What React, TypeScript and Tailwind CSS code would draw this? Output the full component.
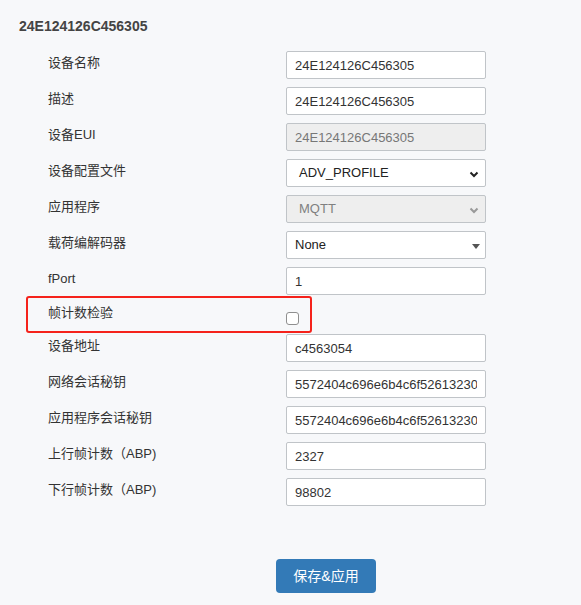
import React from 'react';

type Row = {
    label: string;
    value: string;
    kind?: 'text' | 'disabled' | 'select' | 'select-disabled' | 'combo';
};

const topRows: Row[] = [
    { label: '设备名称', value: '24E124126C456305' },
    { label: '描述', value: '24E124126C456305' },
    { label: '设备EUI', value: '24E124126C456305', kind: 'disabled' },
    { label: '设备配置文件', value: 'ADV_PROFILE', kind: 'select' },
    { label: '应用程序', value: 'MQTT', kind: 'select-disabled' },
    { label: '载荷编解码器', value: 'None', kind: 'combo' },
    { label: 'fPort', value: '1' },
];

const bottomRows: Row[] = [
    { label: '设备地址', value: 'c4563054' },
    { label: '网络会话秘钥', value: '5572404c696e6b4c6f52613230' },
    { label: '应用程序会话秘钥', value: '5572404c696e6b4c6f52613230' },
    { label: '上行帧计数（ABP)', value: '2327' },
    { label: '下行帧计数（ABP)', value: '98802' },
];

const Chevron = ({ color }: { color: string }) => (
    <svg width="10" height="7" viewBox="0 0 10 7" className="absolute right-[6px] top-[11px]">
        <path d="M1.5 1.5 L5 5 L8.5 1.5" fill="none" stroke={color} strokeWidth="2" />
    </svg>
);

const Field = ({ row }: { row: Row }) => {
    const kind = row.kind ?? 'text';
    const base = 'h-[28px] w-[200px] rounded-[2px] border border-[#c0c4c8] text-[13px] outline-none';

    if (kind === 'text' || kind === 'disabled') {
        return (
            <input
                type="text"
                defaultValue={row.value}
                disabled={kind === 'disabled'}
                className={
                    kind === 'disabled'
                        ? `${base} bg-[#eeeeee] px-2 text-[#777]`
                        : `${base} bg-white px-2 text-[#333]`
                }
            />
        );
    }

    return (
        <div
            className={`${base} relative flex items-center ${
                kind === 'select-disabled' ? 'bg-[#eeeeee] text-[#808080]' : 'bg-white text-[#222]'
            } ${kind === 'combo' ? 'pl-2' : 'pl-3'}`}
        >
            <span>{row.value}</span>
            {kind === 'select' && <Chevron color="#222" />}
            {kind === 'select-disabled' && <Chevron color="#999" />}
            {kind === 'combo' && (
                <svg width="8" height="5" viewBox="0 0 8 5" className="absolute right-[5px] top-[12px]">
                    <path d="M0 0 H8 L4 5 Z" fill="#555" />
                </svg>
            )}
        </div>
    );
};

const FormRow = ({ row }: { row: Row }) => (
    <div className="flex items-start">
        <label className="ml-[29px] w-[238px] pt-[2px] text-[13px] leading-[20px] text-[#333]">{row.label}</label>
        <Field row={row} />
    </div>
);

export default function App() {
    return (
        <div className="min-h-[605px] bg-[#f7f8fa] px-[19px] pt-[17px] font-['Liberation_Sans','Noto_Sans_CJK_SC',sans-serif]">
            {/* device title */}
            <h2 className="text-[14px] font-bold leading-[18px] text-[#444]">24E124126C456305</h2>

            <div className="mt-[16px] flex flex-col gap-2">
                {topRows.map((r, i) => (
                    <FormRow key={i} row={r} />
                ))}

                {/* frame counter check, highlighted */}
                <div className="relative flex h-[23px] items-start">
                    <div className="absolute left-[7px] top-[-7px] h-[37px] w-[286px] rounded-[3px] border-2 border-[#f5221b]" />
                    <label className="ml-[29px] w-[238px] text-[13px] leading-[20px] text-[#333]">帧计数检验</label>
                    <input
                        type="checkbox"
                        className="mt-[9px] h-[13px] w-[13px] appearance-none rounded-[3px] border border-[#8f8f8f] bg-white"
                    />
                </div>

                {bottomRows.map((r, i) => (
                    <FormRow key={i} row={r} />
                ))}
            </div>

            <button className="ml-[257px] mt-[53px] h-[34px] w-[100px] rounded-[4px] bg-[#337ab7] text-[14px] text-white">
                保存&amp;应用
            </button>
        </div>
    );
}
